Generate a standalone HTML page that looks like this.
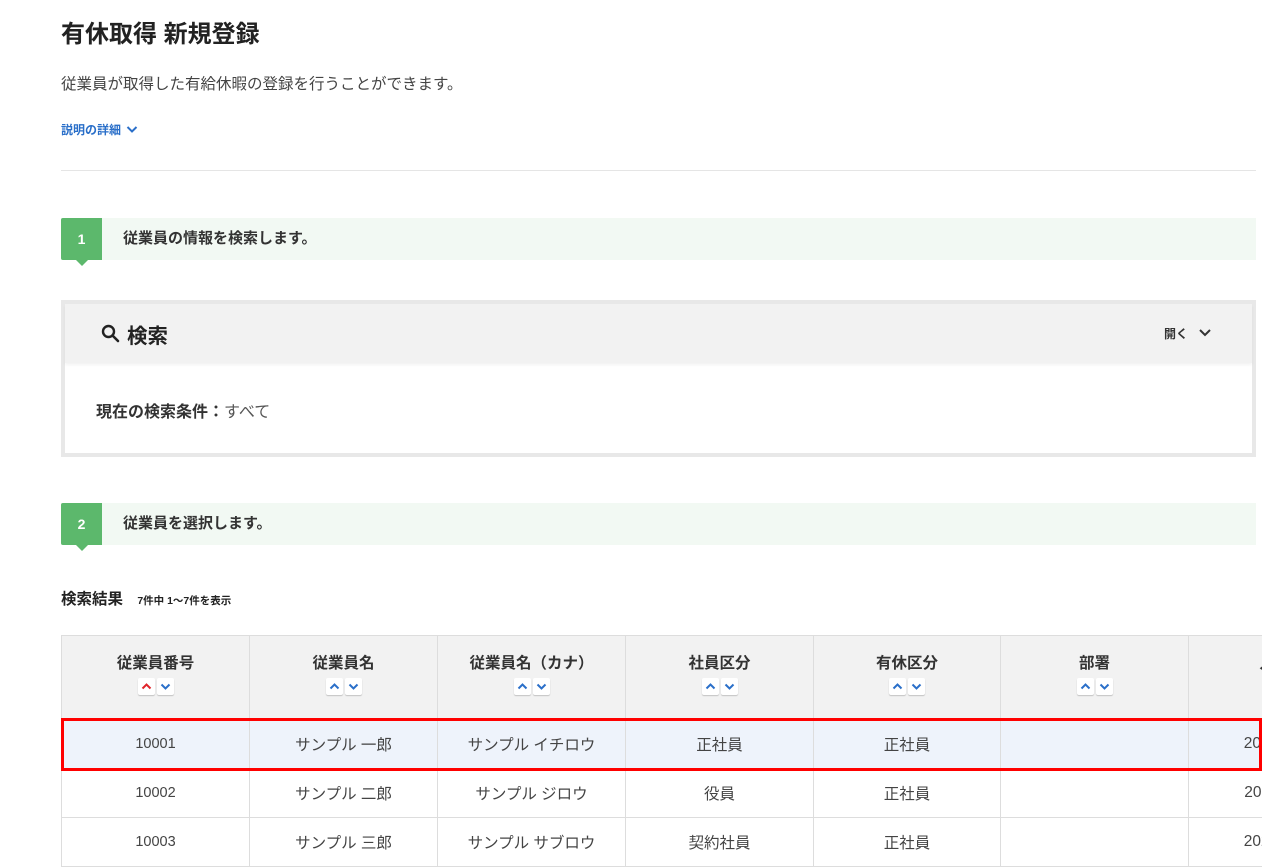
<!DOCTYPE html>
<html lang="ja"><head><meta charset="utf-8">
<style>
*{margin:0;padding:0;box-sizing:border-box}
body{width:1280px;height:867px;overflow:hidden;background:#fff;font-family:"Liberation Sans","Noto Sans CJK JP",sans-serif;color:#333;position:relative}
.a{position:absolute;white-space:nowrap}
.step{position:absolute;left:61px;width:1195px;height:42px;background:#f2f9f3}
.step .n{position:absolute;left:0;top:0;width:41px;height:42px;background:#5cb86c;color:#fff;font-weight:bold;font-size:14px;text-align:center;line-height:42px;border-radius:2px 0 0 2px}
.step .n:after{content:"";position:absolute;left:15px;bottom:-6px;border-left:6px solid transparent;border-right:6px solid transparent;border-top:6px solid #5cb86c}
.step .t{position:absolute;left:62px;top:0;line-height:42px;font-size:15px;font-weight:bold;color:#333}
table{position:absolute;left:61px;top:635px;border-collapse:collapse;table-layout:fixed;width:1315px}
.wrap{position:absolute;left:61px;top:635px;width:1201px;height:232px;overflow:hidden}
.wrap table{left:0;top:0}
td,th{border:1px solid #ddd;text-align:center;font-size:15.5px;color:#444;font-weight:normal}
th{background:#f2f2f2;height:84px;vertical-align:top;padding-top:15px;font-weight:bold;font-size:15.5px;color:#333}
td{height:49px}
tr.sel td{background:#eef3fb}
.sb{display:inline-block;width:17px;height:17px;background:#fff;border-radius:2px;box-shadow:0 1px 1px rgba(0,0,0,.2);margin:5px 1px 0;vertical-align:top}
.sb svg{display:block}
</style></head><body>
<div class="a" style="left:61px;top:14px;font-size:24px;font-weight:bold;color:#222">有休取得 新規登録</div>
<div class="a" style="left:61px;top:72px;font-size:15.5px;color:#444">従業員が取得した有給休暇の登録を行うことができます。</div>
<div class="a" style="left:61px;top:121px;font-size:12px;font-weight:bold;color:#2a6fc9">説明の詳細 <svg width="12" height="9" viewBox="0 0 12 9" style="vertical-align:0;margin-left:2px"><path d="M1.5 2L6 6.5L10.5 2" fill="none" stroke="#2a6fc9" stroke-width="2"/></svg></div>
<div class="a" style="left:61px;top:170px;width:1195px;height:1px;background:#e5e5e5"></div>

<div class="step" style="top:218px"><div class="n">1</div><div class="t">従業員の情報を検索します。</div></div>

<div class="a" style="left:61px;top:300px;width:1195px;height:157px;border:4px solid #e8e8e8;background:#fff"></div>
<div class="a" style="left:65px;top:304px;width:1187px;height:59px;background:#f2f2f2;box-shadow:0 2px 3px rgba(0,0,0,.05)"></div>
<svg class="a" style="left:101px;top:324px" width="20" height="20" viewBox="0 0 20 20"><circle cx="7.5" cy="7.5" r="5.5" fill="none" stroke="#222" stroke-width="2.4"/><path d="M11.5 11.5L17 17" stroke="#222" stroke-width="2.6" stroke-linecap="round"/></svg>
<div class="a" style="left:127px;top:319px;font-size:20.5px;font-weight:bold;color:#222">検索</div>
<div class="a" style="left:1164px;top:325px;font-size:12px;font-weight:bold;color:#333">開く</div>
<svg class="a" style="left:1198px;top:328px" width="14" height="10" viewBox="0 0 14 10"><path d="M2 2L7 7L12 2" fill="none" stroke="#333" stroke-width="2"/></svg>
<div class="a" style="left:96px;top:398px;font-size:16px;color:#555"><b style="color:#333">現在の検索条件：</b>すべて</div>

<div class="step" style="top:503px"><div class="n">2</div><div class="t">従業員を選択します。</div></div>

<div class="a" style="left:61px;top:587px;font-size:15.5px;font-weight:bold;color:#222">検索結果 <span style="font-size:10.5px;margin-left:10px">7件中 1～7件を表示</span></div>

<div class="wrap"><table>
<colgroup><col style="width:188px"><col style="width:188px"><col style="width:188px"><col style="width:188px"><col style="width:187px"><col style="width:188px"><col style="width:188px"></colgroup>
<tr>
<th>従業員番号<br><span class="sb"><svg width="17" height="17"><path d="M4.5 10.5L8.5 6.5L12.5 10.5" fill="none" stroke="#e0242a" stroke-width="2"/></svg></span><span class="sb"><svg width="17" height="17"><path d="M4.5 6.5L8.5 10.5L12.5 6.5" fill="none" stroke="#2a6fc9" stroke-width="2"/></svg></span></th>
<th>従業員名<br><span class="sb"><svg width="17" height="17"><path d="M4.5 10.5L8.5 6.5L12.5 10.5" fill="none" stroke="#2a6fc9" stroke-width="2"/></svg></span><span class="sb"><svg width="17" height="17"><path d="M4.5 6.5L8.5 10.5L12.5 6.5" fill="none" stroke="#2a6fc9" stroke-width="2"/></svg></span></th>
<th>従業員名（カナ）<br><span class="sb"><svg width="17" height="17"><path d="M4.5 10.5L8.5 6.5L12.5 10.5" fill="none" stroke="#2a6fc9" stroke-width="2"/></svg></span><span class="sb"><svg width="17" height="17"><path d="M4.5 6.5L8.5 10.5L12.5 6.5" fill="none" stroke="#2a6fc9" stroke-width="2"/></svg></span></th>
<th>社員区分<br><span class="sb"><svg width="17" height="17"><path d="M4.5 10.5L8.5 6.5L12.5 10.5" fill="none" stroke="#2a6fc9" stroke-width="2"/></svg></span><span class="sb"><svg width="17" height="17"><path d="M4.5 6.5L8.5 10.5L12.5 6.5" fill="none" stroke="#2a6fc9" stroke-width="2"/></svg></span></th>
<th>有休区分<br><span class="sb"><svg width="17" height="17"><path d="M4.5 10.5L8.5 6.5L12.5 10.5" fill="none" stroke="#2a6fc9" stroke-width="2"/></svg></span><span class="sb"><svg width="17" height="17"><path d="M4.5 6.5L8.5 10.5L12.5 6.5" fill="none" stroke="#2a6fc9" stroke-width="2"/></svg></span></th>
<th>部署<br><span class="sb"><svg width="17" height="17"><path d="M4.5 10.5L8.5 6.5L12.5 10.5" fill="none" stroke="#2a6fc9" stroke-width="2"/></svg></span><span class="sb"><svg width="17" height="17"><path d="M4.5 6.5L8.5 10.5L12.5 6.5" fill="none" stroke="#2a6fc9" stroke-width="2"/></svg></span></th>
<th>入社日</th>
</tr>
<tr class="sel"><td style="font-size:14.5px">10001</td><td>サンプル 一郎</td><td>サンプル イチロウ</td><td>正社員</td><td>正社員</td><td></td><td>2001/04/01</td></tr>
<tr><td style="font-size:14.5px">10002</td><td>サンプル 二郎</td><td>サンプル ジロウ</td><td>役員</td><td>正社員</td><td></td><td>2011/04/01</td></tr>
<tr><td style="font-size:14.5px">10003</td><td>サンプル 三郎</td><td>サンプル サブロウ</td><td>契約社員</td><td>正社員</td><td></td><td>2021/04/01</td></tr>
</table></div>
<div class="a" style="left:61px;top:718px;width:1201px;height:53px;border:3px solid #f00"></div>
</body></html>
